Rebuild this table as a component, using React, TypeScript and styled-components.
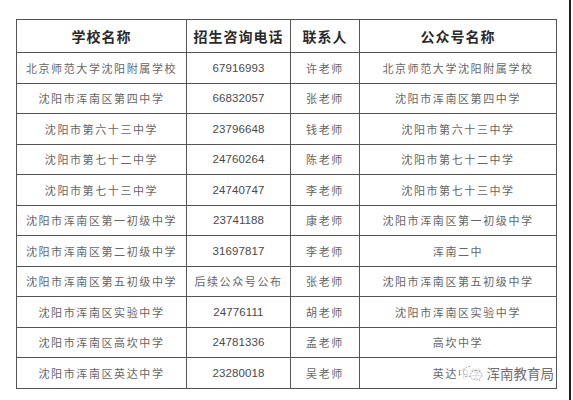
import React from 'react'
import styled, { createGlobalStyle } from 'styled-components'

const GlobalStyle = createGlobalStyle`
	html, body {
		margin: 0;
		padding: 0;
		background: #fff;
	}
	body {
		font-family: "Noto Sans CJK SC", "Liberation Sans", sans-serif;
	}
`

const Page = styled.div`
	box-sizing: border-box;
	width: 571px;
	height: 400px;
	padding: 19px 0 0 16px;
	border-right: 2px solid #1e1e1e;
	background: #fff;
`

const Table = styled.table`
	border-collapse: collapse;
	table-layout: fixed;
	width: 540px;
	border: 1px solid #4a4a4a;
`

interface ColProps {
	w: number
}
const Col = styled.col<ColProps>`
	width: ${({w}) => w}px;
`

const HeadCell = styled.th`
	height: 32px;
	padding: 0;
	border: 1px solid #555;
	font-family: "Noto Sans CJK SC", sans-serif;
	font-weight: 700;
	font-size: 14px;
	letter-spacing: 1px;
	color: #2a2a2a;
	text-align: center;
	vertical-align: middle;
`

interface CellProps {
	num?: boolean
}
const Cell = styled.td<CellProps>`
	position: relative;
	height: 29.5px;
	padding: 0;
	border: 1px solid #555;
	text-align: center;
	vertical-align: middle;
	white-space: nowrap;
	color: #666;
	${({num}) => num ? `
		font-family: "Liberation Sans", Arial, sans-serif;
		font-size: 11.5px;
		letter-spacing: 0.1px;
		color: #4a4a4a;
	` : `
		font-family: "Noto Sans CJK SC", sans-serif;
		font-size: 11px;
		font-weight: 400;
		letter-spacing: 1.6px;
	`}
`

const Watermark = styled.div`
	position: absolute;
	right: 2px;
	top: 50%;
	transform: translateY(-50%);
	display: flex;
	align-items: center;
	gap: 3px;
	padding-left: 2px;
	background: rgba(255, 255, 255, 0.75);
	font-family: "Noto Sans CJK SC", sans-serif;
	font-size: 13.5px;
	letter-spacing: 0;
	color: #6e6e6e;
`

const rows: [string, string, string, string][] = [
	['北京师范大学沈阳附属学校', '67916993', '许老师', '北京师范大学沈阳附属学校'],
	['沈阳市浑南区第四中学', '66832057', '张老师', '沈阳市浑南区第四中学'],
	['沈阳市第六十三中学', '23796648', '钱老师', '沈阳市第六十三中学'],
	['沈阳市第七十二中学', '24760264', '陈老师', '沈阳市第七十二中学'],
	['沈阳市第七十三中学', '24740747', '李老师', '沈阳市第七十三中学'],
	['沈阳市浑南区第一初级中学', '23741188', '康老师', '沈阳市浑南区第一初级中学'],
	['沈阳市浑南区第二初级中学', '31697817', '李老师', '浑南二中'],
	['沈阳市浑南区第五初级中学', '后续公众号公布', '张老师', '沈阳市浑南区第五初级中学'],
	['沈阳市浑南区实验中学', '24776111', '胡老师', '沈阳市浑南区实验中学'],
	['沈阳市浑南区高坎中学', '24781336', '孟老师', '高坎中学'],
	['沈阳市浑南区英达中学', '23280018', '吴老师', '英达中学'],
]

const WechatIcon = () => (
	<svg width="22" height="18" viewBox="0 0 22 18" fill="none" stroke="#9a9a9a" strokeWidth="0.9" strokeDasharray="1.6 1.2">
		<path d="M8 2.5c-3.6 0-6.5 2.3-6.5 5.1 0 1.6.9 3 2.4 3.9l-.6 1.9 2.2-1.1c.8.2 1.6.4 2.5.4" />
		<path d="M14 6.5c-3.3 0-6 2.1-6 4.6s2.7 4.6 6 4.6c.7 0 1.4-.1 2-.3l1.9 1-.5-1.6c1.5-.9 2.6-2.2 2.6-3.7 0-2.5-2.7-4.6-6-4.6z" />
	</svg>
)

const App = () => (
	<>
		<GlobalStyle />
		<Page>
			<Table>
				<colgroup>
					<Col w={170} />
					<Col w={104} />
					<Col w={69} />
					<Col w={197} />
				</colgroup>
				<thead>
					<tr>
						<HeadCell>学校名称</HeadCell>
						<HeadCell>招生咨询电话</HeadCell>
						<HeadCell>联系人</HeadCell>
						<HeadCell>公众号名称</HeadCell>
					</tr>
				</thead>
				<tbody>
					{rows.map((r, k) => (
						<tr key={k}>
							<Cell>{r[0]}</Cell>
							<Cell num={/^\d+$/.test(r[1])}>{r[1]}</Cell>
							<Cell>{r[2]}</Cell>
							<Cell>
								{r[3]}
								{k === rows.length - 1 && (
									<Watermark>
										<WechatIcon />
										<span>浑南教育局</span>
									</Watermark>
								)}
							</Cell>
						</tr>
					))}
				</tbody>
			</Table>
		</Page>
	</>
)

export default App
